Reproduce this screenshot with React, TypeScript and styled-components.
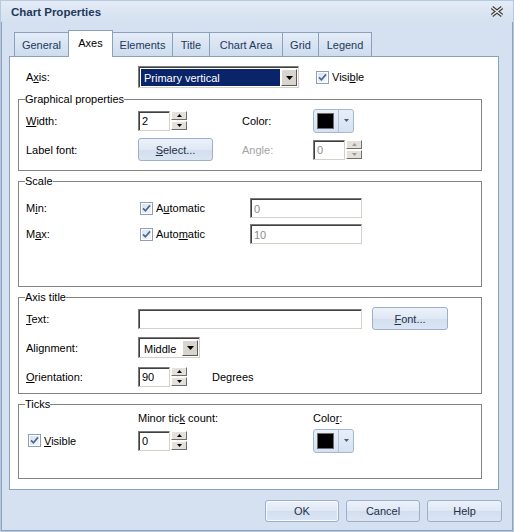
import React from "react";
import styled, { createGlobalStyle, css } from "styled-components";

const GlobalStyle = createGlobalStyle`
  body {
    margin: 0;
    background: #d5e1f0;
  }
  * {
    box-sizing: border-box;
  }
`;

const Window = styled.div`
  width: 514px;
  height: 532px;
  display: flex;
  flex-direction: column;
  background: #d5e1f0;
  border: 1px solid #b8c8dd;
  box-shadow: inset 0 0 0 1px #8fa2bd;
  font-family: "Liberation Sans", Arial, sans-serif;
  font-size: 11px;
  color: #000;
`;

const TitleBar = styled.div`
  height: 21px;
  display: flex;
  align-items: center;
  justify-content: space-between;
  padding: 0 9px 0 10px;
  background: linear-gradient(#e3ebf6, #d5e1f0);
`;

const Title = styled.div`
  font-size: 11.5px;
  font-weight: bold;
  color: #1e395b;
`;

const Body = styled.div`
  padding: 8px 14px 0 8px;
`;

const TabStrip = styled.div`
  display: flex;
  align-items: flex-end;
  height: 26px;
  padding-left: 5px;
`;

const Tab = styled.div<{ $w: number; $active?: boolean }>`
  width: ${(p) => p.$w}px;
  height: 24px;
  margin-left: -1px;
  display: flex;
  align-items: center;
  justify-content: center;
  border: 1px solid #8ba0bc;
  border-bottom: none;
  color: #1e395b;
  background: linear-gradient(#e4ecf7, #cddcee);
  &:first-child {
    margin-left: 0;
  }
  ${(p) =>
    p.$active &&
    css`
      position: relative;
      z-index: 1;
      height: 27px;
      margin-bottom: -1px;
      padding-bottom: 2px;
      color: #000;
      background: #fff;
    `}
`;

const Panel = styled.div`
  height: 434px;
  background: #fff;
  border: 1px solid #8ba0bc;
  padding: 9px 16px 0 8px;
`;

const AxisRow = styled.div`
  display: grid;
  grid-template-columns: 112px 178px auto;
  align-items: center;
  height: 21px;
  padding-left: 8px;
`;

const GroupStack = styled.div`
  display: flex;
  flex-direction: column;
  gap: 4px;
  margin-top: 6px;
`;

const Group = styled.fieldset<{ $h: number }>`
  height: ${(p) => p.$h}px;
  margin: 0;
  min-width: 0;
  padding: 0 0 0 7px;
  border: 1px solid #848484;
`;

const Legend = styled.legend`
  margin-left: -1px;
  padding: 0;
  line-height: 13px;
  color: #000;
`;

const Grid = styled.div<{ $cols: string; $rows: string; $gap?: number; $pt?: number }>`
  display: grid;
  grid-template-columns: ${(p) => p.$cols};
  grid-template-rows: ${(p) => p.$rows};
  row-gap: ${(p) => p.$gap ?? 0}px;
  padding-top: ${(p) => p.$pt ?? 0}px;
  align-items: center;
`;

const Label = styled.span<{ $disabled?: boolean }>`
  color: ${(p) => (p.$disabled ? "#a3a3a3" : "#000")};
  white-space: nowrap;
`;

const Key = styled.u`
  text-decoration: underline;
  text-underline-offset: 1px;
`;

const Inline = styled.div<{ $gap: number }>`
  display: flex;
  align-items: center;
  gap: ${(p) => p.$gap}px;
`;

const Field = styled.div<{ $w: number; $disabled?: boolean }>`
  width: ${(p) => p.$w}px;
  height: 20px;
  display: flex;
  align-items: center;
  padding: 1px 0 0 3px;
  background: #fff;
  border: 1px solid;
  border-color: #7b7b7b #d4d0c8 #d4d0c8 #7b7b7b;
  box-shadow: inset 1px 1px 0 #404040;
  color: ${(p) => (p.$disabled ? "#8c8c8c" : "#000")};
`;

const SpinWrap = styled.div`
  display: flex;
  align-items: center;
  gap: 1px;
`;

const SpinButtons = styled.div`
  display: flex;
  flex-direction: column;
  gap: 1px;
`;

const SpinButton = styled.div`
  width: 16px;
  height: 9px;
  display: flex;
  align-items: center;
  justify-content: center;
  background: #e4e1da;
  border: 1px solid;
  border-color: #fff #6f6f6f #6f6f6f #fff;
`;

const Arrow = ({ up, color = "#000", w = 5 }: { up?: boolean; color?: string; w?: number }) => {
  const h = Math.ceil(w / 2);
  return (
    <svg width={w} height={h} viewBox={`0 0 ${w} ${h}`}>
      <polygon points={up ? `0,${h} ${w},${h} ${w / 2},0` : `0,0 ${w},0 ${w / 2},${h}`} fill={color} />
    </svg>
  );
};

const Spin = ({ value, disabled }: { value: string; disabled?: boolean }) => (
  <SpinWrap>
    <Field $w={32} $disabled={disabled}>
      {value}
    </Field>
    <SpinButtons>
      <SpinButton>
        <Arrow up color={disabled ? "#9a9a9a" : "#000"} />
      </SpinButton>
      <SpinButton>
        <Arrow color={disabled ? "#9a9a9a" : "#000"} />
      </SpinButton>
    </SpinButtons>
  </SpinWrap>
);

const Combo = styled.div<{ $w: number; $h: number }>`
  width: ${(p) => p.$w}px;
  height: ${(p) => p.$h}px;
  display: flex;
  align-items: stretch;
  padding: 1px;
  background: #fff;
  border: 1px solid;
  border-color: #7b7b7b #d4d0c8 #d4d0c8 #7b7b7b;
  box-shadow: inset 1px 1px 0 #404040;
`;

const ComboText = styled.div<{ $selected?: boolean }>`
  flex: 1;
  display: flex;
  align-items: center;
  padding: 1px 0 0 3px;
  margin: 1px 1px 0 1px;
  color: ${(p) => (p.$selected ? "#fff" : "#000")};
  background: ${(p) => (p.$selected ? "#0a246a" : "#fff")};
`;

const ComboButton = styled.div`
  width: 16px;
  display: flex;
  align-items: center;
  justify-content: center;
  margin-top: 1px;
  background: #d8d5ce;
  border: 1px solid;
  border-color: #fff #5a5a5a #5a5a5a #fff;
`;

const CheckRow = styled.div<{ $ml?: number }>`
  display: flex;
  align-items: center;
  gap: 3px;
  margin-left: ${(p) => p.$ml ?? 0}px;
`;

const CheckBox = () => (
  <svg width="13" height="13" viewBox="0 0 13 13">
    <defs>
      <linearGradient id="cbFill" x1="0" y1="0" x2="1" y2="1">
        <stop offset="0" stopColor="#d9e2ee" />
        <stop offset="1" stopColor="#f5f7fa" />
      </linearGradient>
    </defs>
    <rect x="0.5" y="0.5" width="12" height="12" fill="#fff" stroke="#8e9fba" />
    <rect x="2" y="2" width="9" height="9" fill="url(#cbFill)" />
    <path d="M3 6.3 L5.4 8.8 L10 3.4" fill="none" stroke="#48679a" strokeWidth="1.7" />
  </svg>
);

const PushButton = styled.div<{ $w: number; $h: number; $default?: boolean }>`
  width: ${(p) => p.$w}px;
  height: ${(p) => p.$h}px;
  display: flex;
  align-items: center;
  justify-content: center;
  border: 1px solid #9cb0cc;
  border-radius: 3px;
  color: #1e2f48;
  background: linear-gradient(#edf2fa 0%, #dfe8f4 50%, #d3dfef 51%, #dbe5f3 100%);
  ${(p) =>
    p.$default &&
    css`
      box-shadow: inset 0 0 0 1px #f6f9fd;
    `}
`;

const ColorButton = styled.div`
  width: 41px;
  height: 24px;
  display: flex;
  align-items: center;
  border: 1px solid #a4b7d1;
  border-radius: 3px;
  background: linear-gradient(#e8eff9, #d5e1f1);
`;

const Swatch = styled.div<{ $color: string }>`
  width: 17px;
  height: 16px;
  margin-left: 3px;
  background: ${(p) => p.$color};
  border: 1px solid #6c6c6c;
`;

const ColorDrop = styled.div`
  flex: 1;
  height: 100%;
  margin-left: 4px;
  display: flex;
  align-items: center;
  justify-content: center;
  border-left: 1px solid #b3c3d9;
`;

const ColorPicker = ({ color }: { color: string }) => (
  <ColorButton>
    <Swatch $color={color} />
    <ColorDrop>
      <Arrow color="#4a5d78" />
    </ColorDrop>
  </ColorButton>
);

const Footer = styled.div`
  display: flex;
  justify-content: flex-end;
  gap: 7px;
  padding: 10px 11px 0 0;
`;

const CloseIcon = () => (
  <svg width="14" height="11" viewBox="0 0 14 11">
    <path d="M2 1.5 L12 9.5 M12 1.5 L2 9.5" stroke="#3a3a3a" strokeWidth="3.6" />
    <path d="M2 1.5 L12 9.5 M12 1.5 L2 9.5" stroke="#f2f2f2" strokeWidth="1.4" />
  </svg>
);

const tabs = [
  { name: "General", w: 55 },
  { name: "Axes", w: 45 },
  { name: "Elements", w: 61 },
  { name: "Title", w: 38 },
  { name: "Chart Area", w: 74 },
  { name: "Grid", w: 37 },
  { name: "Legend", w: 54 },
];

const App = () => {
  return (
    <>
      <GlobalStyle />
      <Window>
        <TitleBar>
          <Title>Chart Properties</Title>
          <CloseIcon />
        </TitleBar>
        <Body>
          <TabStrip>
            {tabs.map((t) => (
              <Tab key={t.name} $w={t.w} $active={t.name === "Axes"}>
                {t.name}
              </Tab>
            ))}
          </TabStrip>
          <Panel>
            <AxisRow>
              <Label>
                A<Key>x</Key>is:
              </Label>
              <Combo $w={161} $h={22}>
                <ComboText $selected>Primary vertical</ComboText>
                <ComboButton>
                  <Arrow w={7} />
                </ComboButton>
              </Combo>
              <CheckRow>
                <CheckBox />
                <Label>
                  Visi<Key>b</Key>le
                </Label>
              </CheckRow>
            </AxisRow>

            <GroupStack>
              <Group $h={78}>
                <Legend>Graphical properties</Legend>
                <Grid $cols="112px 104px 71px auto" $rows="29px 29px">
                  <Label>
                    <Key>W</Key>idth:
                  </Label>
                  <Spin value="2" />
                  <Label>Color:</Label>
                  <ColorPicker color="#000" />
                  <Label>Label font:</Label>
                  <PushButton $w={75} $h={23}>
                    <span>
                      <Key>S</Key>elect...
                    </span>
                  </PushButton>
                  <Label $disabled>Angle:</Label>
                  <Spin value="0" disabled />
                </Grid>
              </Group>

              <Group $h={112}>
                <Legend>Scale</Legend>
                <Grid $cols="112px 112px auto" $rows="26px 26px" $pt={7}>
                  <Label>
                    M<Key>i</Key>n:
                  </Label>
                  <CheckRow $ml={2}>
                    <CheckBox />
                    <Label>
                      A<Key>u</Key>tomatic
                    </Label>
                  </CheckRow>
                  <Field $w={112} $disabled>
                    0
                  </Field>
                  <Label>
                    M<Key>a</Key>x:
                  </Label>
                  <CheckRow $ml={2}>
                    <CheckBox />
                    <Label>
                      Auto<Key>m</Key>atic
                    </Label>
                  </CheckRow>
                  <Field $w={112} $disabled>
                    10
                  </Field>
                </Grid>
              </Group>

              <Group $h={103}>
                <Legend>Axis title</Legend>
                <Grid $cols="112px 234px auto" $rows="29px 29px 29px">
                  <Label>
                    <Key>T</Key>ext:
                  </Label>
                  <Field $w={224} />
                  <PushButton $w={76} $h={23}>
                    <span>
                      <Key>F</Key>ont...
                    </span>
                  </PushButton>
                  <Label>Alignment:</Label>
                  <Combo $w={62} $h={21}>
                    <ComboText>Middle</ComboText>
                    <ComboButton>
                      <Arrow w={7} />
                    </ComboButton>
                  </Combo>
                  <span />
                  <Label>
                    <Key>O</Key>rientation:
                  </Label>
                  <Inline $gap={25}>
                    <Spin value="90" />
                    <Label>Degrees</Label>
                  </Inline>
                  <span />
                </Grid>
              </Group>

              <Group $h={81}>
                <Legend>Ticks</Legend>
                <Grid $cols="112px 175px auto" $rows="13px 23px" $gap={5}>
                  <span />
                  <Label>
                    Minor tic<Key>k</Key> count:
                  </Label>
                  <Label>
                    Colo<Key>r</Key>:
                  </Label>
                  <CheckRow $ml={2}>
                    <CheckBox />
                    <Label>
                      <Key>V</Key>isible
                    </Label>
                  </CheckRow>
                  <Spin value="0" />
                  <ColorPicker color="#000" />
                </Grid>
              </Group>
            </GroupStack>
          </Panel>
        </Body>
        <Footer>
          <PushButton $w={74} $h={22} $default>
            OK
          </PushButton>
          <PushButton $w={74} $h={22}>
            Cancel
          </PushButton>
          <PushButton $w={75} $h={22}>
            Help
          </PushButton>
        </Footer>
      </Window>
    </>
  );
};

export default App;
